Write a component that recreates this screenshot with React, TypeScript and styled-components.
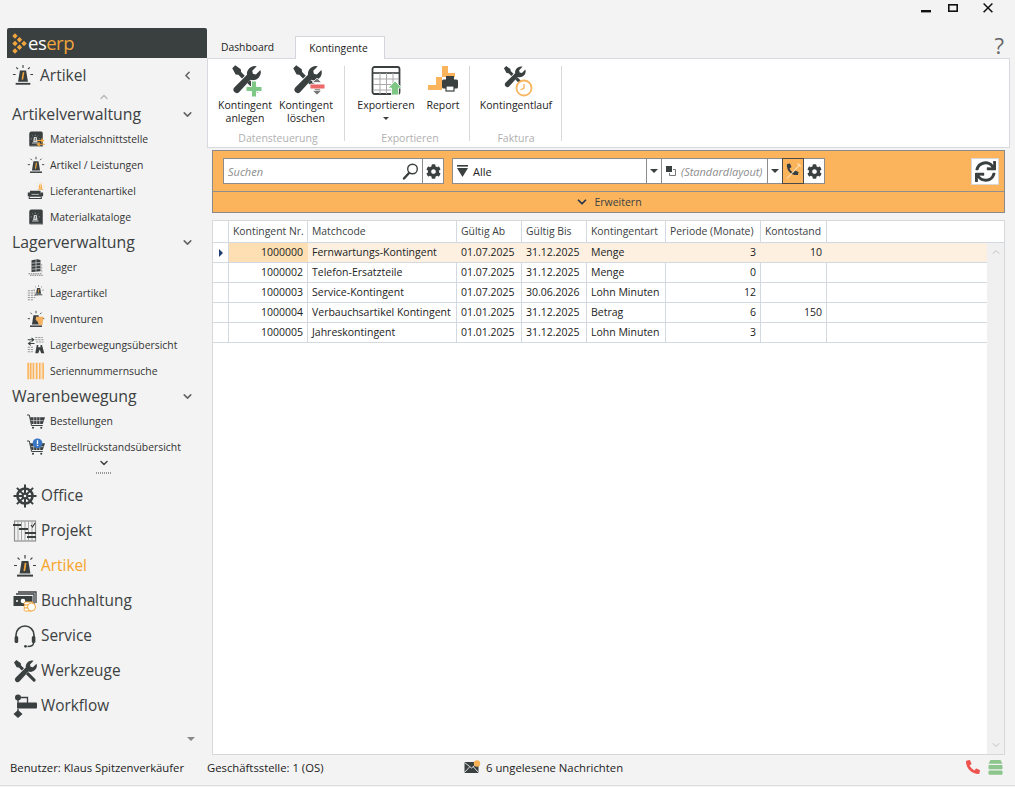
import React from 'react';
import styled, { createGlobalStyle } from 'styled-components';
import { FaCog, FaPhoneAlt, FaSync } from 'react-icons/fa';
import { ChevronDown, ChevronLeft, ChevronUp } from 'lucide-react';

const DARK = '#3a3f40';
const ORANGE = '#fbb45c';
const FONT = '"Open Sans", "Noto Sans", sans-serif';

const GlobalStyle = createGlobalStyle`
  html, body { margin: 0; padding: 0; height: 100%; }
  body { background: #f3f3f3; font-family: ${FONT}; color: #222; overflow: hidden; }
  * { box-sizing: border-box; }
`;

const Window = styled.div`
  width: 1015px;
  height: 787px;
  display: grid;
  grid-template-rows: 28px 727px 30px 2px;
  background: #f3f3f3;
`;

const TitleBar = styled.div`
  display: flex;
  justify-content: flex-end;
  align-items: flex-start;
  padding-right: 18px;
`;

const WinButton = styled.div<{ $gap: number }>`
  width: 19px;
  height: 16px;
  margin-left: ${(p) => p.$gap}px;
  display: flex;
  align-items: center;
  justify-content: center;
`;

const Body = styled.div`
  display: grid;
  grid-template-columns: 207px 1fr;
  min-height: 0;
`;

/* sidebar */
const Sidebar = styled.nav`
  display: flex;
  flex-direction: column;
  min-width: 0;
`;

const Logo = styled.div`
  margin-left: 7px;
  height: 30px;
  background: ${DARK};
  border-radius: 2px 2px 0 0;
  display: flex;
  align-items: center;
  padding-left: 5px;
  gap: 1px;
`;

const LogoText = styled.span`
  font-size: 18.5px;
  letter-spacing: -0.5px;
  color: #fff;
  line-height: 30px;
  b { font-weight: 400; color: #f0a63e; }
`;

const ModuleHeader = styled.div`
  height: 34px;
  display: flex;
  align-items: center;
  padding: 0 13px 0 12px;
  gap: 6px;
  font-size: 15.5px;
  color: #3c4142;
  span { flex: 1; }
`;

const ScrollCaret = styled.div<{ $height: number }>`
  height: ${(p) => p.$height}px;
  display: flex;
  justify-content: center;
  align-items: center;
`;

const Dots = styled.div`
  height: 12px;
  display: flex;
  justify-content: center;
  padding-top: 6px;
  &::before {
    content: '';
    width: 16px;
    height: 2px;
    background: repeating-linear-gradient(90deg, #999 0 1px, transparent 1px 2px);
  }
`;

const GroupTitle = styled.div`
  height: 24px;
  display: flex;
  align-items: center;
  justify-content: space-between;
  padding: 0 13px 0 12px;
  font-size: 15.8px;
  color: #3c4142;
`;

const SideItem = styled.div`
  height: 26px;
  display: flex;
  align-items: center;
  padding-left: 27px;
  gap: 5px;
  font-size: 10.4px;
  color: #333;
  white-space: nowrap;
`;

const NavItem = styled.div<{ $active?: boolean }>`
  height: 35px;
  display: flex;
  align-items: center;
  padding-left: 13px;
  gap: 4px;
  font-size: 15.4px;
  color: ${(p) => (p.$active ? '#f7a428' : '#3c4142')};
`;

const MoreArrow = styled.div`
  flex: 1;
  display: flex;
  justify-content: flex-end;
  align-items: center;
  padding: 0 12px 0 0;
`;

const Caret = styled.i<{ $color?: string; $size?: number }>`
  display: inline-block;
  width: 0;
  height: 0;
  border-left: ${(p) => p.$size ?? 4}px solid transparent;
  border-right: ${(p) => p.$size ?? 4}px solid transparent;
  border-top: ${(p) => p.$size ?? 4}px solid ${(p) => p.$color ?? DARK};
`;

/* main column */
const Main = styled.main`
  display: flex;
  flex-direction: column;
  min-width: 0;
  padding-top: 7px;
`;

const TabRow = styled.div`
  height: 23px;
  display: flex;
  align-items: flex-end;
  position: relative;
  z-index: 1;
`;

const Tab = styled.div<{ $active?: boolean }>`
  height: 23px;
  padding: 0 13px;
  display: flex;
  align-items: center;
  font-size: 10.3px;
  color: #222;
  background: ${(p) => (p.$active ? '#fff' : 'transparent')};
  border: 1px solid ${(p) => (p.$active ? '#d4d6dc' : 'transparent')};
  border-bottom: 0;
  margin-right: ${(p) => (p.$active ? 0 : 7)}px;
  margin-bottom: ${(p) => (p.$active ? -1 : 0)}px;
  width: ${(p) => (p.$active ? '90px' : 'auto')};
`;

const Help = styled.div`
  margin-left: auto;
  margin-right: 11px;
  font-size: 22px;
  line-height: 20px;
  color: #666;
  align-self: center;
  margin-top: -3px;
`;

const Ribbon = styled.div`
  height: 90px;
  margin-right: 5px;
  background: #fff;
  border: 1px solid #d8d9df;
  display: flex;
  padding-top: 7px;
  padding-left: 4px;
`;

const RibbonGroup = styled.div<{ $width: number; $pad?: number }>`
  width: ${(p) => p.$width}px;
  height: 75px;
  padding-left: ${(p) => p.$pad ?? 0}px;
  border-right: 1px solid #d9d9d9;
  display: flex;
  flex-direction: column;
  align-items: stretch;
`;

const RibbonButtons = styled.div`
  flex: 1;
  display: flex;
  align-items: flex-start;
`;

const RibbonButton = styled.div<{ $width: number }>`
  width: ${(p) => p.$width}px;
  display: flex;
  flex-direction: column;
  align-items: center;
  font-size: 10.5px;
  line-height: 13px;
  color: #222;
  text-align: center;
  white-space: nowrap;
  svg { margin-bottom: 1px; overflow: visible; }
`;

const RibbonButtonCaret = styled(Caret)`
  margin-top: 5px;
`;

const GroupLabel = styled.div`
  height: 14px;
  line-height: 14px;
  margin-bottom: -4px;
  text-align: center;
  font-size: 10.5px;
  color: #b0b0b0;
`;

const Content = styled.div`
  flex: 1;
  display: flex;
  flex-direction: column;
  padding: 2px 10px 0 5px;
  min-height: 0;
`;

const FilterPanel = styled.div`
  height: 63px;
  background: ${ORANGE};
  border: 1px solid #8a8a8a;
  display: flex;
  flex-direction: column;
`;

const FilterRow = styled.div`
  height: 41px;
  display: flex;
  align-items: flex-start;
  padding: 7px 5px 0 10px;
  border-bottom: 1px solid #8f8f8f;
`;

const Field = styled.div<{ $width: number; $left?: number }>`
  width: ${(p) => p.$width}px;
  margin-left: ${(p) => p.$left ?? 0}px;
  height: 26px;
  background: #fff;
  border: 1px solid #8c8c8c;
  display: flex;
  align-items: center;
  padding: 0 3px 0 4px;
  gap: 5px;
  font-size: 11px;
  color: #222;
  flex: none;
`;

const Placeholder = styled.span`
  flex: 1;
  font-style: italic;
  color: #8d8d8d;
  white-space: nowrap;
`;

const BoxButton = styled.div<{ $width: number; $active?: boolean }>`
  width: ${(p) => p.$width}px;
  height: 26px;
  flex: none;
  margin-left: -1px;
  background: ${(p) => (p.$active ? ORANGE : '#fff')};
  border: 1px solid ${(p) => (p.$active ? '#4a4a4a' : '#8c8c8c')};
  display: flex;
  align-items: center;
  justify-content: center;
  color: ${DARK};
  position: ${(p) => (p.$active ? 'relative' : 'static')};
`;

const RefreshButton = styled.div`
  margin-left: auto;
  width: 28px;
  height: 27px;
  background: #fff;
  border: 1px solid #d8d8d8;
  display: flex;
  align-items: center;
  justify-content: center;
  color: ${DARK};
`;

const ExpandRow = styled.div`
  flex: 1;
  display: flex;
  align-items: center;
  justify-content: center;
  gap: 5px;
  font-size: 10.5px;
  color: #3c4142;
`;

const DataGrid = styled.div`
  margin-top: 7px;
  flex: 1;
  min-height: 0;
  background: #fff;
  border: 1px solid #d6d8da;
  display: flex;
  flex-direction: column;
`;

const GRID_COLUMNS = '16px 79px 149px 65px 65px 79px 95px 66px 1fr';

const HeaderRow = styled.div`
  height: 22px;
  flex: none;
  display: grid;
  grid-template-columns: ${GRID_COLUMNS};
  border-bottom: 1px solid #d3d9e0;
`;

const HeaderCell = styled.div`
  padding-left: 4px;
  border-right: 1px solid #d3d9e0;
  font-size: 10.4px;
  line-height: 20px;
  color: #3c4142;
  white-space: nowrap;
  overflow: hidden;
  &:last-child { border-right: 0; }
`;

const GridBody = styled.div`
  flex: 1;
  display: flex;
  min-height: 0;
`;

const Rows = styled.div`
  flex: 1;
  min-width: 0;
`;

const Row = styled.div<{ $selected?: boolean }>`
  height: 20px;
  display: grid;
  grid-template-columns: ${GRID_COLUMNS};
  border-bottom: 1px solid #d3d9e0;
  background: ${(p) => (p.$selected ? '#fdf0e0' : '#fff')};
`;

const Cell = styled.div<{ $right?: boolean; $selected?: boolean; $key?: boolean }>`
  padding: 0 4px;
  text-align: ${(p) => (p.$right ? 'right' : 'left')};
  font-size: 10.5px;
  line-height: 19px;
  color: #222;
  white-space: nowrap;
  overflow: hidden;
  border-right: 1px solid ${(p) => (p.$selected ? 'transparent' : '#d3d9e0')};
  background: ${(p) => (p.$key ? '#fedfb3' : 'transparent')};
  &:last-child { border-right: 0; }
`;

const Indicator = styled.div<{ $current?: boolean }>`
  border-right: 1px solid #d3d9e0;
  background: #fff;
  display: flex;
  align-items: center;
  justify-content: center;
  &::before {
    content: '';
    border-left: 4px solid #1f3f73;
    border-top: 4px solid transparent;
    border-bottom: 4px solid transparent;
    visibility: ${(p) => (p.$current ? 'visible' : 'hidden')};
  }
`;

const ScrollBar = styled.div`
  width: 17px;
  flex: none;
  background: #f0f0f0;
  display: flex;
  flex-direction: column;
  justify-content: space-between;
  align-items: center;
  padding: 3px 0;
  color: #c2c2c2;
`;

const StatusBar = styled.div`
  display: flex;
  align-items: center;
  font-size: 11.3px;
  color: #222;
  padding: 0 12px 6px 10px;
  white-space: nowrap;
`;

const StatusText = styled.span<{ $width?: number }>`
  width: ${(p) => (p.$width ? `${p.$width}px` : 'auto')};
  flex: none;
`;

const StatusMessages = styled.div`
  display: flex;
  align-items: center;
  gap: 5px;
`;

const StatusIcons = styled.div`
  margin-left: auto;
  display: flex;
  align-items: center;
  gap: 8px;
  color: #ef5350;
`;

const BottomLine = styled.div`
  border-top: 1px solid #dedede;
`;

/* drawn icons */
type IconProps = { size?: number };

const BeaconParts = ({ body = DARK, mark = '#f5a83c' }: { body?: string; mark?: string }) => (
  <>
    <path d="M12 1v3.4M4.6 3.6l2 2M19.4 3.6l-2 2M1 11.5h3M20 11.5h3" stroke={body} strokeWidth="1.2" fill="none" />
    <path d="M8.6 7h6.8l2 12.4H6.6z" fill={body} />
    <path d="M12.6 9l-1.3 8" stroke={mark} strokeWidth="1.7" />
    <rect x="4" y="20.6" width="16" height="2" fill={body} />
  </>
);

const Beacon = ({ size = 18 }: IconProps) => (
  <svg width={size} height={size} viewBox="0 0 24 24"><BeaconParts /></svg>
);

const Catalog = ({ size = 18, arrows }: IconProps & { arrows?: boolean }) => (
  <svg width={size} height={size} viewBox="0 0 24 24">
    <path d="M3 5a3 3 0 0 1 3-3h13a2 2 0 0 1 2 2v18H5a2 2 0 0 1-2-2z" fill={DARK} />
    <g transform="translate(4.5 5.5) scale(.55)"><BeaconParts body="#d8d8d8" mark={DARK} /></g>
    <path d="M4.5 21.5h15" stroke="#e8e8e8" strokeWidth=".7" />
    {arrows && (
      <path d="M13 14h9M19 11.5l3 2.5-3 2.5M24 19h-10M17 16.8L14 19l3 2.3" stroke="#f5a83c" strokeWidth="1.6" fill="none" />
    )}
  </svg>
);

const Supplier = ({ size = 18 }: IconProps) => (
  <svg width={size} height={size} viewBox="0 0 24 24">
    <path d="M4 11.5h14l1 8H3z" fill={DARK} />
    <path d="M1 14h3v5H1zM18.5 14h3v5h-3z" fill={DARK} />
    <path d="M3 19v3.5M19 19v3.5M3 22h16" stroke={DARK} strokeWidth="1.4" />
    <path d="M6 16.5h10" stroke="#ddd" strokeWidth="1" />
    <g transform="translate(12.5 0) scale(.46)"><BeaconParts body="#f5a83c" mark="#fff" /></g>
  </svg>
);

const Shelves = ({ size = 18 }: IconProps) => (
  <svg width={size} height={size} viewBox="0 0 24 24">
    <path d="M6 3l8-1.5 4 1v15l-12 1z" fill={DARK} />
    <path d="M6 7l12-1M6 11l12-1M6 15l12-1M12 2v16" stroke="#f3f3f3" strokeWidth=".8" />
    <path d="M2 21h17M4 23h18" stroke="#666" strokeWidth="1.1" strokeDasharray="2 1" />
    <path d="M19.5 8v12" stroke="#999" strokeWidth="1.6" strokeDasharray="1 1" />
  </svg>
);

const StockArticle = ({ size = 18 }: IconProps) => (
  <svg width={size} height={size} viewBox="0 0 24 24">
    <path d="M1 9h9M1 12h11M1 15h13M1 18h10M1 21h8" stroke="#9a9a9a" strokeWidth="1.6" strokeDasharray="3 1" />
    <g transform="translate(8 1) scale(.62)"><BeaconParts /></g>
  </svg>
);

const Inventory = ({ size = 18 }: IconProps) => (
  <svg width={size} height={size} viewBox="0 0 24 24">
    <BeaconParts mark={DARK} />
    <path d="M12 9h10l-1.5 11h-5l-1-4-3-3z" fill="#f5b060" />
  </svg>
);

const StockMoves = ({ size = 18 }: IconProps) => (
  <svg width={size} height={size} viewBox="0 0 24 24">
    <path d="M1 5h8M6 2.5L9 5 6 7.5M10 10H2M5 7.6L2 10l3 2.4" stroke={DARK} strokeWidth="1.4" fill="none" />
    <path d="M11 2h10M11 5h11M12 8h10M1 15h8M1 18h7M1 21h7" stroke="#999" strokeWidth="1.4" strokeDasharray="3 1" />
    <path d="M11 23l2-11h2v3h3v-3h2l3 11h-4l-2-5-2 5z" fill={DARK} />
  </svg>
);

const Barcode = ({ size = 18 }: IconProps) => (
  <svg width={size} height={size} viewBox="0 0 24 24">
    <path d="M1.5 1v22M5 1v22M8.5 1v22M13 1v22M17 1v22M21.5 1v22" stroke="#fbb45c" strokeWidth="2.2" />
    <path d="M3.2 1v22M11 1v22M19.3 1v22" stroke="#fbd29c" strokeWidth=".8" />
  </svg>
);

const Cart = ({ size = 18, badge }: IconProps & { badge?: boolean }) => (
  <svg width={size} height={size} viewBox="0 0 24 24">
    <path d="M0 4h3l3 14h15" stroke={DARK} strokeWidth="1.3" fill="none" />
    <path d="M4 7h20l-3 9H6z" fill={DARK} />
    <path d="M9 7v9M13 7v9M17 7v9M5 11.5h17" stroke="#f3f3f3" strokeWidth=".8" />
    <circle cx="8" cy="21" r="1.4" fill={DARK} />
    <circle cx="19" cy="21" r="1.4" fill={DARK} />
    {badge && (
      <>
        <circle cx="14" cy="7" r="6.5" fill="#3a75c4" />
        <rect x="13.1" y="3" width="1.8" height="5" fill="#fff" />
        <rect x="13.1" y="9" width="1.8" height="1.7" fill="#fff" />
      </>
    )}
  </svg>
);

const ShipWheel = ({ size = 24 }: IconProps) => (
  <svg width={size} height={size} viewBox="0 0 24 24">
    <circle cx="12" cy="12" r="7.5" fill="none" stroke={DARK} strokeWidth="2.6" />
    <circle cx="12" cy="12" r="3.4" fill={DARK} />
    <path d="M12 .5v23M.5 12h23M3.9 3.9l16.2 16.2M20.1 3.9L3.9 20.1" stroke={DARK} strokeWidth="2" />
    <circle cx="12" cy="12" r="1.3" fill="#f3f3f3" />
  </svg>
);

const Gantt = ({ size = 24 }: IconProps) => (
  <svg width={size} height={size} viewBox="0 0 24 24">
    <rect x="1.5" y="2" width="21" height="20" fill="none" stroke="#8f8f8f" strokeWidth="1.2" />
    <path d="M5 2v20M8.5 2v20M12 2v20M15.5 2v20M19 2v20" stroke="#a5a5a5" strokeWidth="1" />
    <path d="M0 6h8M6 10h9M12 14h11M14 18h9" stroke={DARK} strokeWidth="1.8" />
    <path d="M18 6l1.5 2 2.5-4" stroke={DARK} strokeWidth="1.2" fill="none" />
  </svg>
);

const Money = ({ size = 24 }: IconProps) => (
  <svg width={size} height={size} viewBox="0 0 24 24">
    <path d="M5 3h18v11" fill="none" stroke={DARK} strokeWidth="1.3" />
    <path d="M3 5h18v11" fill="none" stroke={DARK} strokeWidth="1.3" />
    <rect x=".5" y="7" width="19" height="10" fill={DARK} />
    <circle cx="10" cy="12" r="2.3" fill="#fff" />
    <circle cx="4" cy="12" r="1" fill="#fff" />
    <g fill="#fff" stroke="#f5a83c" strokeWidth="1">
      <rect x="11" y="13" width="9" height="3" rx="1.5" />
      <rect x="11" y="16" width="9" height="3" rx="1.5" />
      <rect x="11" y="19" width="9" height="3" rx="1.5" />
      <circle cx="18.5" cy="18" r="4" />
    </g>
  </svg>
);

const Headset = ({ size = 24 }: IconProps) => (
  <svg width={size} height={size} viewBox="0 0 24 24" fill="none" stroke={DARK}>
    <path d="M3 15v-4a9 9 0 0 1 18 0v4" strokeWidth="1.6" />
    <rect x="1.6" y="12" width="3.6" height="7" rx="1.5" fill={DARK} strokeWidth="0" />
    <rect x="18.8" y="12" width="3.6" height="7" rx="1.5" fill={DARK} strokeWidth="0" />
    <path d="M20.5 19c0 2.5-3 3.500-6 3.500" strokeWidth="1.4" />
    <circle cx="12.5" cy="22.3" r="1.4" fill={DARK} strokeWidth="0" />
  </svg>
);

const ToolParts = ({ color = DARK }: { color?: string }) => (
  <g fill={color}>
    <path d="M20.6 1.8l-3.600 3.600.5 2.400 2.400.5 3.600-3.600a6.200 6.200 0 0 1-8 7.800L6.400 22.600a2.700 2.700 0 0 1-3.800-3.800L12.800 8.600A6.200 6.200 0 0 1 20.600 1.800z" />
    <path d="M1 3.400L3.400 1l4.400 3.200.3 2.200 2.900 2.900-2.200 2.200L5.900 8.600l-2.200-.3z" />
    <path d="M13 15.200l2.200-2.200 7 7a1.600 1.600 0 0 1 0 2.200 1.600 1.600 0 0 1-2.200 0z" />
  </g>
);

const Tools = ({ size = 24 }: IconProps) => (
  <svg width={size} height={size} viewBox="0 0 24 24"><ToolParts /></svg>
);

const Flow = ({ size = 24 }: IconProps) => (
  <svg width={size} height={size} viewBox="0 0 24 24">
    <circle cx="5" cy="3.500" r="3" fill={DARK} />
    <path d="M5 6v5M8 3.500h6.500V10" stroke={DARK} strokeWidth="1.300" fill="none" />
    <rect x="4" y="8.500" width="20" height="6" rx="1" fill={DARK} />
    <path d="M5 14.500v3" stroke={DARK} strokeWidth="1.300" />
    <path d="M5 16l4.500 4L5 24 .5 20z" fill={DARK} />
  </svg>
);

const DiamondLogo = () => (
  <svg width={15} height={21} viewBox="0 0 15 21" fill="#f0a63e">
    {[[3, 3], [7.500, 6.700], [12, 10.500], [7.500, 14.300], [3, 18], [3, 10.500]].map(([x, y]) => (
      <path key={`${x}-${y}`} d={`M${x} ${y - 2.700}l2.700 2.700-2.700 2.700-2.700-2.700z`} />
    ))}
  </svg>
);

const ToolsPlus = () => (
  <svg width={32} height={32} viewBox="0 0 32 32">
    <g transform="translate(2 -2) scale(1.250)"><ToolParts /></g>
    <path d="M22.500 15h5v5.500H33v5h-5.500V31h-5v-5.500H17v-5h5.500z" fill="#7fc785" stroke="#fff" strokeWidth="1" />
  </svg>
);

const ToolsMinus = () => (
  <svg width={32} height={32} viewBox="0 0 32 32">
    <g transform="translate(2 -2) scale(1.250)"><ToolParts /></g>
    <path d="M27 12l4.500 4.500h-9z" fill="#777" stroke="#fff" strokeWidth=".7" />
    <rect x="20" y="18" width="15" height="5" rx="1" fill="#ec6a6a" stroke="#fff" strokeWidth=".9" />
    <path d="M27 29l-4.500-4.500h9z" fill="#777" stroke="#fff" strokeWidth=".7" />
  </svg>
);

const ToolsClock = () => (
  <svg width={32} height={32} viewBox="0 0 32 32">
    <g transform="translate(3 -1) scale(.95)"><ToolParts /></g>
    <circle cx="24" cy="22" r="7.500" fill="#fff" stroke="#f7b55f" strokeWidth="1.800" />
    <path d="M24 18v4l-3.500 2" stroke="#f7b55f" strokeWidth="1.400" fill="none" />
  </svg>
);

const ExportTable = () => (
  <svg width={32} height={32} viewBox="0 0 32 32">
    <rect x="2.500" y="1" width="27" height="27" rx="2" fill="#fff" stroke={DARK} strokeWidth="1.800" />
    <path d="M3 7h26" stroke={DARK} strokeWidth="1.600" />
    <path d="M3 13h26M3 18.500h26M3 24h26M10 7v21M16.500 7v21M23 7v21" stroke="#a9a9a9" strokeWidth="1" />
    <path d="M25 15l7 7h-3.500v7h-7v-7H18z" fill="#7fc785" stroke="#fff" strokeWidth=".8" />
  </svg>
);

const ReportIcon = () => (
  <svg width={32} height={32} viewBox="0 0 32 32">
    <path d="M1 19h8v5H1zM9 11h6v13H9zM15 0h6v11h-6zM21 7h7v4h-7z" fill="#fbb45c" />
    <rect x="19" y="10" width="8" height="4" fill={DARK} />
    <rect x="15" y="13.500" width="16" height="9" rx="1.500" fill={DARK} />
    <rect x="19" y="20" width="8" height="5" fill="#fff" stroke={DARK} strokeWidth="1.200" />
  </svg>
);

const Magnifier = () => (
  <svg width={17} height={17} viewBox="0 0 17 17" fill="none" stroke={DARK}>
    <circle cx="10.500" cy="6" r="4.800" strokeWidth="1.400" />
    <path d="M7 10l-5 5.500" strokeWidth="2.400" strokeLinecap="round" />
  </svg>
);

const FilterIcon = () => (
  <svg width={11} height={12} viewBox="0 0 11 12" fill={DARK}>
    <rect width="11" height="1.600" />
    <path d="M0 3h11L5.500 12z" />
  </svg>
);

const LayoutIcon = () => (
  <svg width={10} height={10} viewBox="0 0 10 10">
    <rect width="6" height="6" fill={DARK} />
    <path d="M7 3.500h2.500v6H3.500V7" fill="none" stroke="#777" strokeWidth="1" />
  </svg>
);

const PenPhone = () => (
  <svg width={18} height={18} viewBox="0 0 18 18">
    <path d="M3 2l3-.5 1.500 3.500-2 1.500c.8 2 2 3.200 4 4l1.500-2 3.500 1.500-.5 3C7.500 14 2 8.500 3 2z" fill={DARK} />
    <path d="M16 2.500L3 16.500M13.500 1.500l3.500 3" stroke="#fde3c0" strokeWidth="1.100" fill="none" />
  </svg>
);

const MailIcon = () => (
  <svg width={17} height={14} viewBox="0 0 17 14">
    <rect x=".5" y="2" width="14" height="11" fill={DARK} />
    <path d="M.5 2.500l7 5.500 7-5.500M.5 12.500L5.500 7M14.500 12.500L9.500 7" stroke="#f3f3f3" strokeWidth=".9" fill="none" />
    <circle cx="13" cy="3.500" r="3.200" fill="#f8b156" />
  </svg>
);

const DbIcon = () => (
  <svg width={15} height={15} viewBox="0 0 15 15" fill="#8cc68c">
    <path d="M2.500 0h10l2 3.800H.5z" />
    <rect x=".5" y="5" width="14" height="4.200" rx="1" />
    <rect x=".5" y="10.500" width="14" height="4.200" rx="1" />
  </svg>
);

const sections = [
  {
    title: 'Artikelverwaltung',
    items: [
      { label: 'Materialschnittstelle', icon: <Catalog arrows /> },
      { label: 'Artikel / Leistungen', icon: <Beacon /> },
      { label: 'Lieferantenartikel', icon: <Supplier /> },
      { label: 'Materialkataloge', icon: <Catalog /> },
    ],
  },
  {
    title: 'Lagerverwaltung',
    items: [
      { label: 'Lager', icon: <Shelves /> },
      { label: 'Lagerartikel', icon: <StockArticle /> },
      { label: 'Inventuren', icon: <Inventory /> },
      { label: 'Lagerbewegungsübersicht', icon: <StockMoves /> },
      { label: 'Seriennummernsuche', icon: <Barcode /> },
    ],
  },
  {
    title: 'Warenbewegung',
    items: [
      { label: 'Bestellungen', icon: <Cart /> },
      { label: 'Bestellrückstandsübersicht', icon: <Cart badge /> },
    ],
  },
];

const modules = [
  { label: 'Office', icon: <ShipWheel /> },
  { label: 'Projekt', icon: <Gantt /> },
  { label: 'Artikel', icon: <Beacon size={24} />, active: true },
  { label: 'Buchhaltung', icon: <Money /> },
  { label: 'Service', icon: <Headset /> },
  { label: 'Werkzeuge', icon: <Tools /> },
  { label: 'Workflow', icon: <Flow /> },
];

const columns = ['Kontingent Nr.', 'Matchcode', 'Gültig Ab', 'Gültig Bis', 'Kontingentart', 'Periode (Monate)', 'Kontostand'];

const rows = [
  ['1000000', 'Fernwartungs-Kontingent', '01.07.2025', '31.12.2025', 'Menge', '3', '10'],
  ['1000002', 'Telefon-Ersatzteile', '01.07.2025', '31.12.2025', 'Menge', '0', ''],
  ['1000003', 'Service-Kontingent', '01.07.2025', '30.06.2026', 'Lohn Minuten', '12', ''],
  ['1000004', 'Verbauchsartikel Kontingent', '01.01.2025', '31.12.2025', 'Betrag', '6', '150'],
  ['1000005', 'Jahreskontingent', '01.01.2025', '31.12.2025', 'Lohn Minuten', '3', ''],
];

const RIGHT_COLUMNS = [0, 5, 6];

function App() {
  return (
    <>
      <GlobalStyle />
      <Window>
        <TitleBar>
          <WinButton $gap={0}>
            <svg width="10" height="16" viewBox="0 0 10 16"><rect y="10" width="10" height="2.400" fill="#111" /></svg>
          </WinButton>
          <WinButton $gap={8}>
            <svg width="10" height="16" viewBox="0 0 10 16"><rect x=".8" y="4.800" width="8.400" height="6.400" fill="none" stroke="#111" strokeWidth="1.600" /></svg>
          </WinButton>
          <WinButton $gap={16}>
            <svg width="10" height="16" viewBox="0 0 10 16"><path d="M.6 3.500l8.800 8.800M9.400 3.500L.6 12.300" stroke="#111" strokeWidth="1.500" /></svg>
          </WinButton>
        </TitleBar>

        <Body>
          <Sidebar>
            <Logo>
              <DiamondLogo />
              <LogoText>es<b>erp</b></LogoText>
            </Logo>
            <ModuleHeader>
              <Beacon size={22} />
              <span>Artikel</span>
              <ChevronLeft size={13} strokeWidth={3} color="#666" />
            </ModuleHeader>
            <ScrollCaret $height={10}>
              <ChevronUp size={12} strokeWidth={3} color="#bbb" />
            </ScrollCaret>
            {sections.map((section) => (
              <React.Fragment key={section.title}>
                <GroupTitle>
                  {section.title}
                  <ChevronDown size={13} strokeWidth={3} color="#666" />
                </GroupTitle>
                {section.items.map((item) => (
                  <SideItem key={item.label}>
                    {item.icon}
                    {item.label}
                  </SideItem>
                ))}
              </React.Fragment>
            ))}
            <ScrollCaret $height={6}>
              <ChevronDown size={12} strokeWidth={3} color="#444" />
            </ScrollCaret>
            <Dots />
            {modules.map((m) => (
              <NavItem key={m.label} $active={m.active}>
                {m.icon}
                {m.label}
              </NavItem>
            ))}
            <MoreArrow>
              <Caret $color="#888" $size={4} />
            </MoreArrow>
          </Sidebar>

          <Main>
            <TabRow>
              <Tab>Dashboard</Tab>
              <Tab $active>Kontingente</Tab>
              <Help>?</Help>
            </TabRow>
            <Ribbon>
              <RibbonGroup $width={133}>
                <RibbonButtons>
                  <RibbonButton $width={66}>
                    <ToolsPlus />
                    Kontingent<br />anlegen
                  </RibbonButton>
                  <RibbonButton $width={56}>
                    <ToolsMinus />
                    Kontingent<br />löschen
                  </RibbonButton>
                </RibbonButtons>
                <GroupLabel>Datensteuerung</GroupLabel>
              </RibbonGroup>
              <RibbonGroup $width={125} $pad={6}>
                <RibbonButtons>
                  <RibbonButton $width={70}>
                    <ExportTable />
                    Exportieren
                    <RibbonButtonCaret $size={3} />
                  </RibbonButton>
                  <RibbonButton $width={44}>
                    <ReportIcon />
                    Report
                  </RibbonButton>
                </RibbonButtons>
                <GroupLabel>Exportieren</GroupLabel>
              </RibbonGroup>
              <RibbonGroup $width={92} $pad={1}>
                <RibbonButtons>
                  <RibbonButton $width={92}>
                    <ToolsClock />
                    Kontingentlauf
                  </RibbonButton>
                </RibbonButtons>
                <GroupLabel>Faktura</GroupLabel>
              </RibbonGroup>
            </Ribbon>

            <Content>
              <FilterPanel>
                <FilterRow>
                  <Field $width={200}>
                    <Placeholder>Suchen</Placeholder>
                    <Magnifier />
                  </Field>
                  <BoxButton $width={22}><FaCog size={15} /></BoxButton>
                  <Field $width={195} $left={8}>
                    <FilterIcon />
                    Alle
                  </Field>
                  <BoxButton $width={16}><Caret /></BoxButton>
                  <Field $width={107} $left={-1}>
                    <LayoutIcon />
                    <Placeholder>(Standardlayout)</Placeholder>
                  </Field>
                  <BoxButton $width={16}><Caret /></BoxButton>
                  <BoxButton $width={22} $active><PenPhone /></BoxButton>
                  <BoxButton $width={22}><FaCog size={15} /></BoxButton>
                  <RefreshButton><FaSync size={21} /></RefreshButton>
                </FilterRow>
                <ExpandRow>
                  <ChevronDown size={14} strokeWidth={3} color="#24364f" />
                  Erweitern
                </ExpandRow>
              </FilterPanel>

              <DataGrid>
                <HeaderRow>
                  <HeaderCell />
                  {columns.map((c) => <HeaderCell key={c}>{c}</HeaderCell>)}
                  <HeaderCell />
                </HeaderRow>
                <GridBody>
                  <Rows>
                    {rows.map((row, r) => (
                      <Row key={row[0]} $selected={r === 0}>
                        <Indicator $current={r === 0} />
                        {row.map((value, c) => (
                          <Cell key={c} $right={RIGHT_COLUMNS.includes(c)} $selected={r === 0} $key={r === 0 && c === 0}>
                            {value}
                          </Cell>
                        ))}
                        <Cell $selected={r === 0} />
                      </Row>
                    ))}
                  </Rows>
                  <ScrollBar>
                    <ChevronUp size={12} strokeWidth={2} />
                    <ChevronDown size={12} strokeWidth={2} />
                  </ScrollBar>
                </GridBody>
              </DataGrid>
            </Content>
          </Main>
        </Body>

        <StatusBar>
          <StatusText $width={197}>Benutzer: Klaus Spitzenverkäufer</StatusText>
          <StatusText $width={257}>Geschäftsstelle: 1 (OS)</StatusText>
          <StatusMessages>
            <MailIcon />
            6 ungelesene Nachrichten
          </StatusMessages>
          <StatusIcons>
            <FaPhoneAlt size={14} />
            <DbIcon />
          </StatusIcons>
        </StatusBar>
        <BottomLine />
      </Window>
    </>
  );
}

export default App;
